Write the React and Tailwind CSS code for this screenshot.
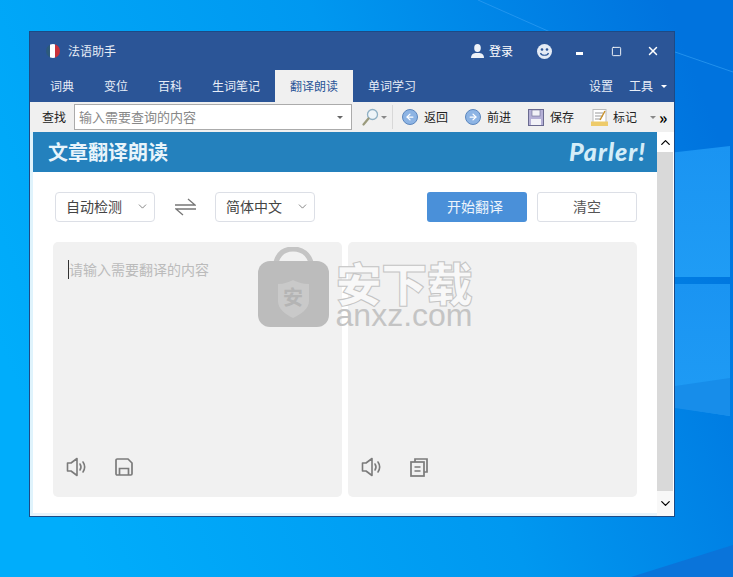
import React from 'react';
import { ChevronDown, ChevronUp, X, Square, ArrowLeft, ArrowRight } from 'lucide-react';

const font = "font-['Noto_Sans_CJK_SC','Noto_Sans',sans-serif]";

function Speaker() {
  return (
    <svg width="22" height="20" viewBox="0 0 22 20" fill="none" stroke="#7b7b7b" strokeWidth="1.6">
      <path d="M1.500 6h3.500L11 1.500v17L5 14H1.500z" strokeLinejoin="round" />
      <path d="M14 7c1.200 1.800 1.200 4.200 0 6M17 5c2 3 2 7 0 10" strokeLinecap="round" />
    </svg>
  );
}

function DiskOutline() {
  return (
    <svg width="18" height="18" viewBox="0 0 18 18" fill="none" stroke="#7b7b7b" strokeWidth="1.700">
      <path d="M1 2.200C1 1.500 1.500 1 2.200 1H13l4 4v10.800c0 .7-.5 1.200-1.200 1.200H2.200c-.7 0-1.200-.5-1.200-1.200z" />
      <path d="M4.500 17v-6.500h9V17" />
    </svg>
  );
}

function CopyIcon() {
  return (
    <svg width="18" height="19" viewBox="0 0 18 19" fill="none" stroke="#7b7b7b" strokeWidth="1.700">
      <path d="M5 4V1h12v13h-3" />
      <rect x="1" y="4" width="13" height="14" />
      <path d="M4.500 9h6M4.500 13h6" />
    </svg>
  );
}

function Flag() {
  return (
    <span className="flex h-[14px] w-[14px] overflow-hidden rounded-full">
      <span className="w-[4px] bg-[#2c5a7c]" />
      <span className="w-[5px] bg-white" />
      <span className="w-[5px] bg-[#c8303a]" />
    </span>
  );
}

function RoundNav({ children }) {
  return (
    <span className="flex h-[16px] w-[16px] items-center justify-center rounded-full border border-[#5b86bd] bg-[#8db4e4] text-white">
      {children}
    </span>
  );
}

function Select({ label }) {
  return (
    <div className="flex h-[30px] w-[100px] items-center justify-between rounded-[4px] border border-[#dcdfe6] bg-white pl-[10px] pr-[5px] pb-[1px] text-[14px] text-[#444]">
      <span>{label}</span>
      <ChevronDown size={13} strokeWidth={1.300} className="text-[#555]" />
    </div>
  );
}

// desktop wallpaper
function Wallpaper() {
  return (
    <svg className="absolute inset-0" width="733" height="577" viewBox="0 0 733 577">
      <defs>
        <linearGradient id="wall" x1="0" y1="0.600" x2="1" y2="0.300">
          <stop offset="0" stopColor="#00adfb" />
          <stop offset="0.550" stopColor="#0098f0" />
          <stop offset="1" stopColor="#0073de" />
        </linearGradient>
        <linearGradient id="pane" x1="0" y1="0" x2="0" y2="1">
          <stop offset="0" stopColor="#1a94f2" />
          <stop offset="1" stopColor="#1f9cf5" />
        </linearGradient>
      </defs>
      <rect width="733" height="577" fill="url(#wall)" />
      <path d="M478 0L575 43M675 52L733 72" stroke="#2f9df2" strokeWidth="1" opacity="0.700" fill="none" />
      <path d="M660 154L730 146V277H660z" fill="url(#pane)" />
      <path d="M660 284H730V416L660 405z" fill="url(#pane)" />
      <path d="M675 386L730 378V416L675 408z" fill="#178dea" />
      <path d="M631 577L733 545V577z" fill="#0a74da" />
    </svg>
  );
}

function Watermark() {
  return (
    <div className="absolute left-[258px] top-[247px] flex items-start gap-[5px]">
      <div className="relative h-[80px] w-[71px]">
        <svg width="71" height="80" viewBox="0 0 71 80">
          <path d="M17 20C19 6 27 2 35 2s17 4 19 18" fill="none" stroke="#c4c4c4" strokeWidth="5" />
          <rect x="0" y="14" width="71" height="66" rx="12" fill="#bcbcbc" />
          <path d="M20 37c6 0 11-2 15-4 4 2 9 4 16 4v17c0 8-8 13-16 17-8-4-15-9-15-17z" fill="#c9c9c9" />
        </svg>
        <span className="absolute left-[25px] top-[38px] text-[20px] leading-[24px] font-bold text-[#b4b4b4]">安</span>
      </div>
      <div className="mt-[12px] flex w-[140px] flex-col items-center">
        <span className="text-[46px] leading-[44px] font-black tracking-[-0.500px] text-[#f8f8f8] [-webkit-text-stroke:1px_#c4c4c4]">安下载</span>
        <span className="text-[32px] leading-[24px] text-[#c4c4c4] font-['Liberation_Sans',sans-serif]">anxz.com</span>
      </div>
    </div>
  );
}

export default function App() {
  const tabs = ['词典', '变位', '百科', '生词笔记', '翻译朗读', '单词学习'];

  return (
    <div className={`relative h-[577px] w-[733px] overflow-hidden pt-[31px] pl-[29px] ${font}`}>
      <Wallpaper />
      <div className="relative flex h-[486px] w-[646px] flex-col border border-[#1c4a86] bg-white">
        <div className="flex h-[38px] items-center bg-[#2b5597] pl-[16px] pr-[14px] text-[12px] text-white">
          <Flag />
          <span className="ml-[8px] text-[#e6ecf5]">法语助手</span>
          <svg className="ml-auto" width="13" height="14" viewBox="0 0 13 14" fill="#eef2f8">
            <ellipse cx="6.500" cy="4" rx="3.300" ry="4" />
            <path d="M0 14c0-3 1.500-4.500 4.500-5h4c3 .5 4.500 2 4.500 5z" />
          </svg>
          <span className="ml-[5px]">登录</span>
          <svg className="ml-[24px]" width="15" height="15" viewBox="0 0 15 15">
            <circle cx="7.500" cy="7.500" r="7.500" fill="#e4ebf5" />
            <circle cx="5" cy="5.500" r="1.300" fill="#2b5597" />
            <circle cx="10" cy="5.500" r="1.300" fill="#2b5597" />
            <path d="M3.500 9c1 3 7 3 8 0" fill="none" stroke="#2b5597" strokeWidth="1.200" />
          </svg>
          <span className="ml-[24px] mt-[5px] h-[3px] w-[7px] bg-white" />
          <Square size={11} strokeWidth={2} className="ml-[28px]" />
          <X size={14} strokeWidth={2.500} className="ml-[24px]" />
        </div>

        <div className="flex h-[32px] bg-[#2b5597] pl-[5px] text-[12px] text-[#e8eef7]">
          {tabs.map((t) => (
            <div
              key={t}
              className={t === '翻译朗读'
                ? 'flex h-[32px] items-center bg-[#f0f0f0] px-[15px] text-[#2b5597]'
                : 'flex h-[32px] items-center px-[15px]'}
            >
              {t}
            </div>
          ))}
          <span className="ml-auto flex items-center">设置</span>
          <span className="ml-[16px] flex items-center">工具</span>
          <span className="ml-[8px] mr-[7px] mt-[15px] h-0 w-0 border-x-[3px] border-t-[3px] border-x-transparent border-t-white" />
        </div>

        <div className="flex h-[30px] items-center bg-[#f0f0f0] pl-[12px] text-[12px] text-[#222]">
          <span>查找</span>
          <div className="ml-[8px] flex h-[26px] w-[278px] items-center border border-[#ababab] bg-white pl-[4px] pr-[8px] text-[13px] text-[#888]">
            <span>输入需要查询的内容</span>
            <span className="ml-auto h-0 w-0 border-x-[3px] border-t-[3px] border-x-transparent border-t-[#666]" />
          </div>
          <svg className="ml-[10px]" width="17" height="18" viewBox="0 0 17 18" fill="none">
            <circle cx="10.500" cy="6.500" r="5" fill="#eef4f8" stroke="#8fb0c4" strokeWidth="1.300" />
            <path d="M6.500 10.500L1.500 16.500" stroke="#9a9a7c" strokeWidth="2.200" strokeLinecap="round" />
          </svg>
          <span className="ml-[2px] h-0 w-0 border-x-[3px] border-t-[3px] border-x-transparent border-t-[#888]" />
          <span className="ml-[5px] h-[24px] w-px bg-[#d8d8d8]" />
          <span className="ml-[9px]"><RoundNav><ArrowLeft size={10} strokeWidth={3} /></RoundNav></span>
          <span className="ml-[6px]">返回</span>
          <span className="ml-[17px]"><RoundNav><ArrowRight size={10} strokeWidth={3} /></RoundNav></span>
          <span className="ml-[6px]">前进</span>
          <svg className="ml-[17px]" width="16" height="17" viewBox="0 0 16 17">
            <rect x="0.500" y="0.500" width="15" height="16" fill="#b5b0d6" stroke="#6a6a90" />
            <rect x="4" y="1" width="8" height="6" fill="#f2f2f8" stroke="#6a6a90" strokeWidth="0.600" />
            <rect x="3" y="10" width="10" height="6" fill="#f2f2f8" />
          </svg>
          <span className="ml-[6px]">保存</span>
          <svg className="ml-[17px]" width="17" height="17" viewBox="0 0 17 17">
            <rect x="2" y="0.500" width="13" height="13" fill="#fff" stroke="#bbb" />
            <path d="M4 4h8M4 7h8M4 10h6" stroke="#999" />
            <path d="M14 2L9 11" stroke="#c8912a" strokeWidth="1.500" />
            <rect x="0" y="12.500" width="17" height="4.500" fill="#eecb6a" />
          </svg>
          <span className="ml-[5px]">标记</span>
          <span className="ml-[13px] h-0 w-0 border-x-[3px] border-t-[3px] border-x-transparent border-t-[#888]" />
          <span className="ml-[3px] text-[16px] leading-none font-bold text-black">»</span>
        </div>

        <div className="flex flex-1 overflow-hidden border-l-[3px] border-l-[#dff3fc]">
          <div className="flex w-[624px] flex-col border-b-[3px] border-b-[#e6f3fb]">
            <div className="flex h-[40px] items-center justify-between bg-[#2481bd] pl-[15px] pr-[11px]">
              <span className="text-[20px] font-bold text-[#e8f4fb]">文章翻译朗读</span>
              <span className="text-[25px] font-black italic tracking-[1px] text-[#d4edf8] font-['Lato',sans-serif]">Parler!</span>
            </div>

            <div className="mt-[20px] flex items-center pl-[22px] pr-[20px]">
              <Select label="自动检测" />
              <svg className="ml-[20px]" width="21" height="18" viewBox="0 0 21 18" fill="none" stroke="#777" strokeWidth="1.300">
                <path d="M0 7h20L13 1M21 11H1l7 6" />
              </svg>
              <div className="ml-[19px]"><Select label="简体中文" /></div>
              <button className="ml-auto h-[30px] w-[100px] rounded-[3px] bg-[#4a90d9] pr-[4px] pb-[1px] text-[14px] text-[#eef5fc]">开始翻译</button>
              <button className="ml-[10px] h-[30px] w-[100px] rounded-[3px] border border-[#dcdfe6] bg-white pb-[1px] text-[14px] text-[#555]">清空</button>
            </div>

            <div className="mt-[20px] flex gap-[6px] pl-[20px]">
              <div className="flex h-[255px] w-[289px] flex-col justify-between rounded-[5px] bg-[#f1f1f1] pl-[13px] pb-[20px] pt-[17px]">
                <div className="flex h-[20px] items-center pl-[2px] text-[14px] text-[#bbb]">
                  <span className="mr-[-1px] h-[19px] w-px bg-[#333]" />
                  <span className="ml-[1px]">请输入需要翻译的内容</span>
                </div>
                <div className="flex items-center gap-[27px]">
                  <Speaker />
                  <DiskOutline />
                </div>
              </div>
              <div className="flex h-[255px] w-[289px] flex-col justify-end rounded-[5px] bg-[#f1f1f1] pl-[13px] pb-[20px]">
                <div className="flex items-center gap-[27px]">
                  <Speaker />
                  <CopyIcon />
                </div>
              </div>
            </div>
          </div>

          <div className="flex w-[16px] flex-col bg-[#d9d9d9]">
            <div className="flex h-[20px] items-center justify-center bg-white"><ChevronUp size={15} strokeWidth={2} className="text-black" /></div>
            <div className="flex-1" />
            <div className="flex h-[25px] items-center justify-center bg-[#f8f8f8]"><ChevronDown size={15} strokeWidth={2} className="text-black" /></div>
          </div>
        </div>
      </div>
      <Watermark />
    </div>
  );
}
